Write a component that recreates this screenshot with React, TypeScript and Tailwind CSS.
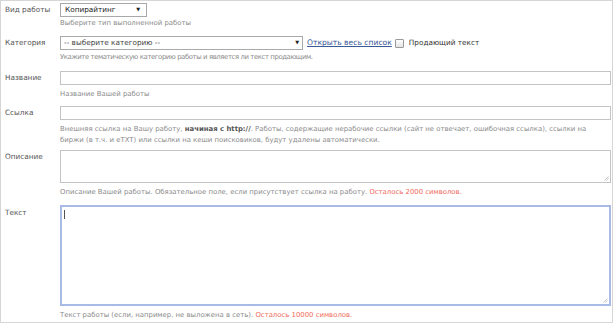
import React from "react";

const font = { fontFamily: '"DejaVu Sans", Verdana, sans-serif' };

function Label({ children }: { children: React.ReactNode }) {
  return <div className="w-[59px] shrink-0 pl-[4px] text-[7.3px] leading-[14px] text-[#555]">{children}</div>;
}

function Hint({ children, className = "" }: { children: React.ReactNode; className?: string }) {
  return <div className={`text-[6.9px] leading-[11px] text-[#8a8a8a] ${className}`}>{children}</div>;
}

function Grip() {
  return (
    <svg className="absolute bottom-[1px] right-[1px]" width="6" height="6" viewBox="0 0 6 6">
      <path d="M5.5 1.5 L1.5 5.5 M5.5 3.5 L3.5 5.5" stroke="#aaa" strokeWidth="0.7" />
    </svg>
  );
}

export default function App() {
  return (
    <div style={font} className="w-[613px] h-[323px] overflow-hidden border border-[#d6d6d6] bg-white">
      {/* Вид работы */}
      <div className="flex pt-[2px]">
        <Label>Вид работы</Label>
        <div>
          <div className="flex h-[14px] w-[87px] items-center justify-between border border-[#a9a9a9] pl-[4px] pr-[6px] text-[7.3px] text-[#222]">
            <span>Копирайтинг</span>
            <span className="text-[5px]">▼</span>
          </div>
          <Hint className="mt-[1px]">Выберите тип выполненной работы</Hint>
        </div>
      </div>

      {/* Категория */}
      <div className="mt-[7px] flex">
        <Label>Категория</Label>
        <div>
          <div className="flex items-center">
            <div className="flex h-[14px] w-[243px] items-center justify-between border border-[#a9a9a9] pl-[3px] pr-[3px] text-[7.3px] text-[#444]">
              <span>-- выберите категорию --</span>
              <span className="text-[5px] text-[#222]">▼</span>
            </div>
            <a className="ml-[4px] text-[7.6px] text-[#3b5998] underline">Открыть весь список</a>
            <span className="ml-[3px] inline-block h-[9px] w-[9px] rounded-[1px] border border-[#9a9a9a] bg-gradient-to-b from-white to-[#e4e4e4]" />
            <span className="ml-[5px] text-[7.3px] text-[#333]">Продающий текст</span>
          </div>
          <Hint className="mt-[2px] tracking-[-0.4px]">Укажите тематическую категорию работы и является ли текст продающим.</Hint>
        </div>
      </div>

      {/* Название */}
      <div className="mt-[8px] flex">
        <Label>Название</Label>
        <div className="flex-1 pr-[1px]">
          <div className="h-[14px] w-full border border-[#c4c4c4]" />
          <Hint className="mt-[4px]">Название Вашей работы</Hint>
        </div>
      </div>

      {/* Ссылка */}
      <div className="mt-[6px] flex">
        <Label>Ссылка</Label>
        <div className="flex-1 pr-[1px]">
          <div className="h-[14px] w-full border border-[#c4c4c4]" />
          <Hint className="mt-[4px]">
            Внешняя ссылка на Вашу работу, <span className="font-bold text-[#555]">начиная с http://</span>. Работы, содержащие нерабочие ссылки (сайт не отвечает, ошибочная ссылка), ссылки на биржи (в т.ч. и eTXT) или ссылки на кеши поисковиков, будут удалены автоматически.
          </Hint>
        </div>
      </div>

      {/* Описание */}
      <div className="mt-[4px] flex">
        <Label>Описание</Label>
        <div className="flex-1 pr-[1px]">
          <div className="relative h-[33px] w-full border border-[#c4c4c4]">
            <Grip />
          </div>
          <Hint className="mt-[4px]">
            Описание Вашей работы. Обязательное поле, если присутствует ссылка на работу. <span className="text-[#ef6a5a]">Осталось 2000 символов.</span>
          </Hint>
        </div>
      </div>

      {/* Текст */}
      <div className="mt-[7px] flex">
        <div className="w-[59px] shrink-0 pl-[4px] pt-[1px] text-[7.3px] leading-[14px] text-[#555]">Текст</div>
        <div className="flex-1 pr-[1px]">
          <div className="relative h-[101px] w-full border-2 border-[#a8bae6]">
            <span className="absolute left-[2px] top-[3px] h-[9px] w-px bg-[#555]" />
            <Grip />
          </div>
          <Hint className="mt-[4px]">
            Текст работы (если, например, не выложена в сеть). <span className="text-[#ef6a5a]">Осталось 10000 символов.</span>
          </Hint>
        </div>
      </div>
    </div>
  );
}
